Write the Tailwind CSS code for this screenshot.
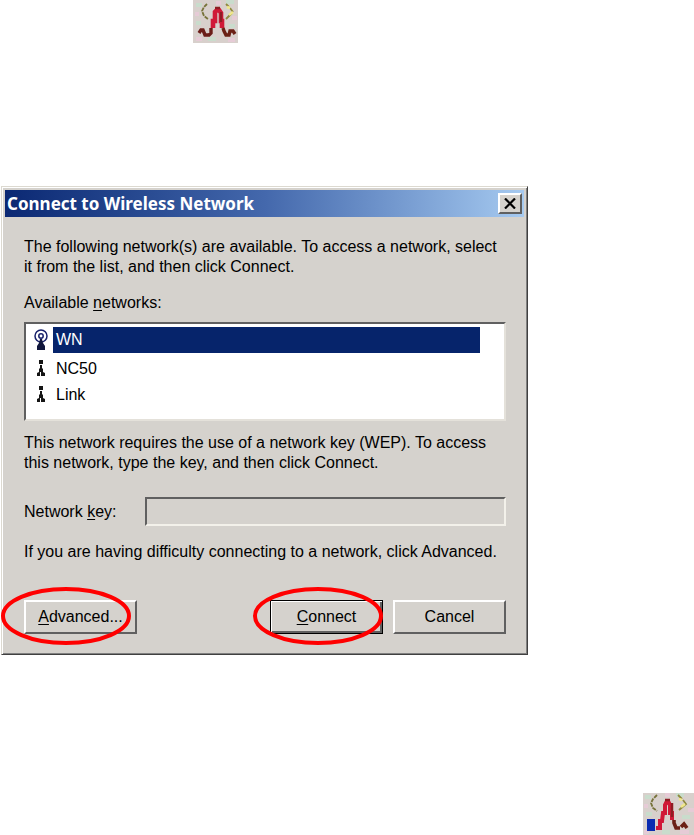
<!DOCTYPE html>
<html lang="en">
<head>
  <meta charset="UTF-8">
  <meta name="viewport" content="width=device-width, initial-scale=1.0">
  <title>Connect to Wireless Network</title>
  <script src="https://cdn.jsdelivr.net/npm/@tailwindcss/browser@4"></script>
</head>
<body class="flex flex-col min-h-screen bg-white text-black text-base leading-5 font-['Liberation_Sans',Arial,sans-serif]">
  <header class="pl-[193px] h-[186px]">
    <!-- tray icon, connected -->
    <svg class="block w-[45px] h-[43px]" viewBox="0 0 45 43" fill="none" aria-label="Wireless tray icon">
      <rect width="45" height="43" fill="#d8d0cc"/>
      <path d="M3 5h6M15 39h8M36 26h6M3 23h5M33 2h8" stroke="#c9dccc" stroke-width="4"/>
      <path d="M2 14h4M23 3h5M39 18h5M3 39h6M35 40h7" stroke="#e6cbd6" stroke-width="4"/>
      <path d="M14 4l-3 3-2 4 2 5 4 3" stroke="#77733a" stroke-width="1.8" stroke-dasharray="4 1"/>
      <path d="M33 4l3 3M37 8l3 4M39 13l-6 6" stroke="#8f8a40" stroke-width="1.8"/>
      <path d="M34 7l3 1M36 15l4-3" stroke="#f0e88c" stroke-width="2.5"/>
      <path d="M20 28v-7h2v-9l2-2h2l2 3v8h1v7" stroke="#d01837" stroke-width="4.6"/>
      <path d="M22 8h5M28 12v10" stroke="#8f1c23" stroke-width="2.4"/>
      <path d="M6 33l2-3h2l2 5h4l2-2v-5" stroke="#6b1d18" stroke-width="3.4"/>
      <path d="M30 28l1 3 2 4h3l1-4h3l2 3" stroke="#6b2015" stroke-width="3.4"/>
    </svg>
  </header>

  <main class="px-px">
    <form class="relative w-full max-w-[527px] p-0.5 bg-[#d5d2cd] border border-t-[#dcd9d0] border-l-[#dcd9d0] border-r-[#404040] border-b-[#404040] shadow-[inset_1px_1px_#fff,inset_-1px_-1px_#808080]">
      <div class="flex items-center justify-between h-[27px] m-px pl-0.5 pr-0.5 bg-linear-to-r from-[#0b2873] via-[#4468ac] to-[#a6caf0]">
        <h1 class="text-white text-[17px] font-bold font-['Noto_Sans',sans-serif]">Connect to Wireless Network</h1>
        <button type="button" aria-label="Close" class="flex items-center justify-center w-6 h-[21px] bg-[#d5d2cd] border-2 border-t-white border-l-white border-r-[#606060] border-b-[#606060]">
          <svg class="w-3 h-[11px]" viewBox="0 0 12 11" stroke="#000" stroke-width="2.2"><path d="M1 .5l10 10M11 .5l-10 10"/></svg>
        </button>
      </div>

      <div class="pt-[19px] pb-[18px] pl-5 pr-[19px]">
        <p>The following network(s) are available. To access a network, select<br>it from the list, and then click Connect.</p>
        <p id="networksLabel" class="mt-4">Available <u class="underline-offset-2">n</u>etworks:</p>

        <ul role="listbox" aria-labelledby="networksLabel" class="mt-[9px] h-[99px] pt-[3px] pl-1.5 pr-6 bg-white border-2 border-t-[#606060] border-l-[#606060] border-r-[#e4e1da] border-b-[#e4e1da]">
          <li role="option" aria-selected="true" class="flex items-center h-[26px] mb-[3px]">
            <svg class="w-[18px] h-6 mr-[3px]" viewBox="0 0 18 24" fill="none">
              <circle cx="9" cy="8" r="6" stroke="#18216b" stroke-width="1.5"/>
              <circle cx="9" cy="8" r="2.2" stroke="#18216b" stroke-width="1.5"/>
              <path d="M8 11h2l1 4 2 3v4H5v-4l2-3z" fill="#10163c"/>
            </svg>
            <span class="flex-1 h-full pl-[3px] leading-[26px] bg-[#06246b] text-white">WN</span>
          </li>
          <li role="option" aria-selected="false" class="flex items-center h-[26px]">
            <svg class="w-[18px] h-6 mr-1.5" viewBox="0 0 18 24" fill="#151515">
              <path d="M7 3h4v4H7zM8 8h2v3l1 1v3l2 1v3H9v-4H8v4H5v-3l2-1v-3l1-1z"/>
            </svg>
            <span>NC50</span>
          </li>
          <li role="option" aria-selected="false" class="flex items-center h-[26px]">
            <svg class="w-[18px] h-6 mr-1.5" viewBox="0 0 18 24" fill="#151515">
              <path d="M7 3h4v4H7zM8 8h2v3l1 1v3l2 1v3H9v-4H8v4H5v-3l2-1v-3l1-1z"/>
            </svg>
            <span>Link</span>
          </li>
        </ul>

        <p class="mt-3">This network requires the use of a network key (WEP). To access<br>this network, type the key, and then click Connect.</p>

        <div class="flex items-center mt-6">
          <label for="networkKey" class="w-[121px]">Network <u class="underline-offset-2">k</u>ey:</label>
          <input type="text" id="networkKey" disabled class="flex-1 min-w-0 h-[29px] px-1 bg-[#d5d2cd] border-2 border-t-[#606060] border-l-[#606060] border-r-[#f3f1ea] border-b-[#f3f1ea]">
        </div>

        <p class="mt-4">If you are having difficulty connecting to a network, click Advanced.</p>

        <div class="flex mt-[38px]">
          <div class="relative">
            <button type="button" class="block w-[113px] h-[34px] bg-[#d5d2cd] border-2 border-t-white border-l-white border-r-[#606060] border-b-[#606060]"><u class="underline-offset-2">A</u>dvanced...</button>
            <svg class="absolute -left-6 -top-3.5 w-[132px] h-[60px] pointer-events-none" viewBox="0 0 132 60" fill="none"><ellipse cx="66" cy="30" rx="63" ry="27" stroke="#f00" stroke-width="4"/></svg>
          </div>
          <div class="relative ml-auto">
            <button type="submit" class="block w-[113px] h-[34px] bg-[#d5d2cd] border border-black shadow-[inset_1px_1px_#fff,inset_-2px_-2px_#606060]"><u class="underline-offset-2">C</u>onnect</button>
            <svg class="absolute -left-[18px] -top-3.5 w-[132px] h-[60px] pointer-events-none" viewBox="0 0 132 60" fill="none"><ellipse cx="66" cy="30" rx="63" ry="27" stroke="#f00" stroke-width="4"/></svg>
          </div>
          <button type="button" class="w-[113px] h-[34px] ml-2.5 bg-[#d5d2cd] border-2 border-t-white border-l-white border-r-[#606060] border-b-[#606060]">Cancel</button>
        </div>
      </div>
    </form>
  </main>

  <footer class="mt-auto flex justify-end">
    <!-- tray icon, with the blue block -->
    <svg class="block w-[51px] h-[42px]" viewBox="0 0 51 42" fill="none" aria-label="Wireless tray icon">
      <rect width="51" height="42" fill="#d8d0cc"/>
      <path d="M2 4h6M19 39h8M39 24h8M3 21h6M33 2h8" stroke="#c9dccc" stroke-width="4"/>
      <path d="M1 13h4M22 2h5M45 17h6M1 39h5M37 39h9" stroke="#e6cbd6" stroke-width="4"/>
      <path d="M14 2l-4 4-2 4 2 5 4 3" stroke="#77733a" stroke-width="1.8" stroke-dasharray="4 1"/>
      <path d="M35 2l4 4M40 7l3 4-7 6" stroke="#8f8a40" stroke-width="1.8"/>
      <path d="M36 6l3 1M38 14l4-3" stroke="#f0e88c" stroke-width="2.5"/>
      <path d="M13 35h4v-7h2l1-8h2v-8l2-4h1l2 4v8h2v7" stroke="#d01837" stroke-width="4"/>
      <path d="M22 7h5M29 10v14" stroke="#8f1c23" stroke-width="2.5"/>
      <path d="M31 27v3l2 5h4M38 34l3-3 3 4" stroke="#6b2015" stroke-width="3.6"/>
      <rect x="4" y="26" width="8" height="12" fill="#0a2bb0"/>
    </svg>
  </footer>
</body>
</html>
